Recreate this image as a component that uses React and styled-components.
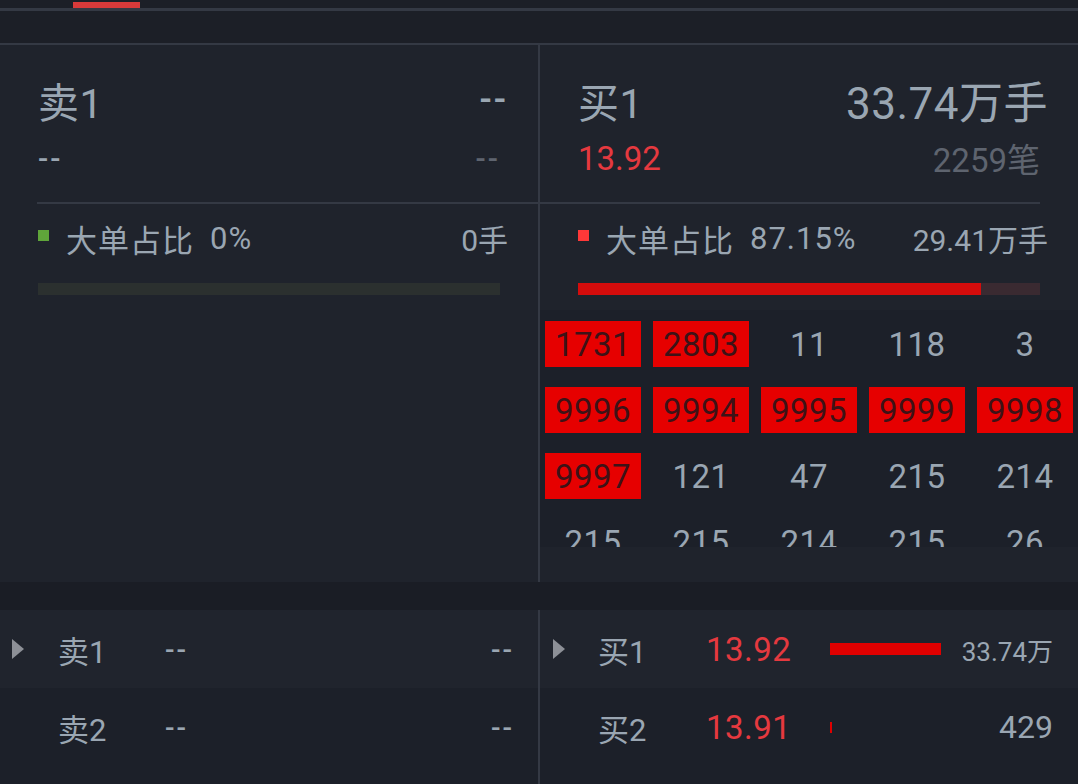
import React from "react";
import styled, { createGlobalStyle } from "styled-components";

const Global = createGlobalStyle`
  html, body { margin: 0; padding: 0; background: #1f232c; }
  body { font-family: Roboto, "Noto Sans CJK SC", sans-serif; color: #9aa6b2; }
  * { box-sizing: border-box; }
`;

const Page = styled.div`
  width: 1078px;
  height: 784px;
  overflow: hidden;
  background: #1f232c;
  display: flex;
  flex-direction: column;
`;

const TabStrip = styled.div`
  height: 11px;
  background: #1c1f27;
  border-bottom: 3px solid #343944;
  padding-left: 73px;
  display: flex;
  align-items: flex-end;
`;

const TabIndicator = styled.div`
  width: 67px;
  height: 6px;
  background: #d83a3a;
`;

const SubBar = styled.div`
  height: 34px;
  background: #1c1f27;
  border-bottom: 2px solid #343944;
`;

const Main = styled.div`
  height: 537px;
  display: grid;
  grid-template-columns: 538px 2px 1fr;
`;

const VDivider = styled.div`
  background: #343944;
`;

const Column = styled.div`
  display: flex;
  flex-direction: column;
  padding-top: 30px;
  padding-left: ${(p) => p.$pl}px;
`;

const Head = styled.div`
  display: flex;
  flex-direction: column;
  padding-right: ${(p) => p.$pr}px;
  padding-bottom: 24px;
`;

const LabelRow = styled.div`
  display: flex;
  justify-content: space-between;
  align-items: center;
  height: ${(p) => p.$h}px;
  margin-top: ${(p) => p.$mt || 0}px;
  padding-right: ${(p) => p.$pr || 0}px;
`;

const BigText = styled.span`
  font-size: ${(p) => p.$size || 41}px;
  color: #9aa6b2;
  letter-spacing: 0.5px;
`;

const SubText = styled.span`
  font-size: 33px;
  color: ${(p) => p.$color || "#9aa6b2"};
`;

const Dash = styled.span`
  font-size: ${(p) => p.$size || 32}px;
  color: ${(p) => p.$color || "#9aa6b2"};
  letter-spacing: 2px;
  font-weight: 500;
`;

const HLine = styled.div`
  height: 2px;
  background: #343944;
  margin-left: ${(p) => p.$ml}px;
  width: ${(p) => p.$w}px;
`;

const Ratio = styled.div`
  display: flex;
  align-items: center;
  height: 40px;
  margin-top: 14px;
  padding-right: ${(p) => p.$pr}px;
  font-size: 30px;
`;

const Marker = styled.span`
  width: 11px;
  height: 11px;
  background: ${(p) => p.$color};
  margin-right: 17px;
  margin-top: -6px;
`;

const RatioLabel = styled.span`
  letter-spacing: 1px;
  font-size: 31px;
`;

const RatioPct = styled.span`
  margin-left: 16px;
  letter-spacing: 1px;
  font-size: 31px;
`;

const RatioAmt = styled.span`
  margin-left: auto;
`;

const Track = styled.div`
  margin-top: 25px;
  width: 462px;
  height: 12px;
  background: ${(p) => p.$bg};
  display: flex;
`;

const Fill = styled.div`
  height: 100%;
  background: #d40c0c;
`;

const GridArea = styled.div`
  margin-top: 15px;
  margin-left: -38px;
  height: 237px;
  overflow: hidden;
  background: #1c2029;
  padding: 11px 0 0 5px;
`;

const NumGrid = styled.div`
  display: grid;
  grid-template-columns: repeat(5, 96px);
  grid-auto-rows: 46px;
  column-gap: 12px;
  row-gap: 20px;
`;

const Cell = styled.div`
  display: flex;
  align-items: center;
  justify-content: center;
  font-size: 33px;
  letter-spacing: 0.5px;
  background: ${(p) => (p.$hot ? "#e60000" : "transparent")};
  color: ${(p) => (p.$hot ? "#3d1217" : "#9aa6b2")};
`;

const Gap = styled.div`
  height: 28px;
  background: #1a1d25;
`;

const Bottom = styled.div`
  flex: 1;
  display: grid;
  grid-template-columns: 538px 2px 1fr;
  background: #1c2029;
`;

const BookCol = styled.div`
  display: flex;
  flex-direction: column;
`;

const BookRow = styled.div`
  height: 78px;
  display: grid;
  grid-template-columns: ${(p) => p.$cols};
  align-items: center;
  padding-left: ${(p) => p.$pl}px;
  padding-right: ${(p) => p.$pr}px;
  background: ${(p) => (p.$active ? "#20242d" : "transparent")};
`;

const Caret = styled.span`
  width: 0;
  height: 0;
  border-top: 10px solid transparent;
  border-bottom: 10px solid transparent;
  border-left: 12px solid ${(p) => (p.$show ? "#8d9097" : "transparent")};
`;

const BookLabel = styled.span`
  font-size: 31px;
  color: #9aa6b2;
`;

const Price = styled.span`
  font-size: 33px;
  color: #e5393f;
  letter-spacing: 0.5px;
`;

const Amount = styled.span`
  justify-self: end;
  font-size: ${(p) => p.$size}px;
  color: #9aa6b2;
`;

const BarSlot = styled.div`
  display: flex;
  align-items: center;
`;

const VolBar = styled.div`
  height: ${(p) => p.$h}px;
  background: #e00000;
`;

const gridData = [
  [["1731", 1], ["2803", 1], ["11"], ["118"], ["3"]],
  [["9996", 1], ["9994", 1], ["9995", 1], ["9999", 1], ["9998", 1]],
  [["9997", 1], ["121"], ["47"], ["215"], ["214"]],
  [["215"], ["215"], ["214"], ["215"], ["26"]],
];

export default function App() {
  return (
    <Page>
      <Global />
      <TabStrip>
        <TabIndicator />
      </TabStrip>
      <SubBar />
      <Main>
        <Column $pl={38}>
          <Head $pr={0}>
            <LabelRow $h={50} $pr={30}>
              <BigText>卖1</BigText>
              <Dash $size={36}>--</Dash>
            </LabelRow>
            <LabelRow $h={40} $mt={13} $pr={38}>
              <Dash $size={30}>--</Dash>
              <Dash $size={30} $color="#5e646f">--</Dash>
            </LabelRow>
          </Head>
          <HLine $ml={-1} $w={501} />
          <Ratio $pr={30}>
            <Marker $color="#5fa53a" />
            <RatioLabel>大单占比</RatioLabel>
            <RatioPct>0%</RatioPct>
            <RatioAmt>0手</RatioAmt>
          </Ratio>
          <Track $bg="#2b302f" />
        </Column>
        <VDivider />
        <Column $pl={38}>
          <Head $pr={30}>
            <LabelRow $h={50}>
              <BigText>买1</BigText>
              <BigText $size={44}>33.74万手</BigText>
            </LabelRow>
            <LabelRow $h={40} $mt={13} $pr={8}>
              <SubText $color="#e5393f">13.92</SubText>
              <SubText $color="#5e646f">2259笔</SubText>
            </LabelRow>
          </Head>
          <HLine $ml={-38} $w={500} />
          <Ratio $pr={30}>
            <Marker $color="#ff3838" />
            <RatioLabel>大单占比</RatioLabel>
            <RatioPct>87.15%</RatioPct>
            <RatioAmt>29.41万手</RatioAmt>
          </Ratio>
          <Track $bg="#3a2a31">
            <Fill style={{ width: "87.15%" }} />
          </Track>
          <GridArea>
            <NumGrid>
              {gridData.flat().map(([v, hot], i) => (
                <Cell key={i} $hot={!!hot}>
                  {v}
                </Cell>
              ))}
            </NumGrid>
          </GridArea>
        </Column>
      </Main>
      <Gap />
      <Bottom>
        <BookCol>
          <BookRow $active $pl={12} $pr={24} $cols="46px 107px 1fr auto">
            <Caret $show />
            <BookLabel>卖1</BookLabel>
            <Dash $size={28}>--</Dash>
            <Dash $size={28}>--</Dash>
          </BookRow>
          <BookRow $pl={12} $pr={24} $cols="46px 107px 1fr auto">
            <Caret />
            <BookLabel>卖2</BookLabel>
            <Dash $size={28}>--</Dash>
            <Dash $size={28}>--</Dash>
          </BookRow>
        </BookCol>
        <VDivider />
        <BookCol>
          <BookRow $active $pl={13} $pr={25} $cols="45px 108px 124px 1fr auto">
            <Caret $show />
            <BookLabel>买1</BookLabel>
            <Price>13.92</Price>
            <BarSlot>
              <VolBar $h={12} style={{ width: "111px" }} />
            </BarSlot>
            <Amount $size={26}>33.74万</Amount>
          </BookRow>
          <BookRow $pl={13} $pr={25} $cols="45px 108px 124px 1fr auto">
            <Caret />
            <BookLabel>买2</BookLabel>
            <Price>13.91</Price>
            <BarSlot>
              <VolBar $h={11} style={{ width: "2px" }} />
            </BarSlot>
            <Amount $size={32}>429</Amount>
          </BookRow>
        </BookCol>
      </Bottom>
    </Page>
  );
}
